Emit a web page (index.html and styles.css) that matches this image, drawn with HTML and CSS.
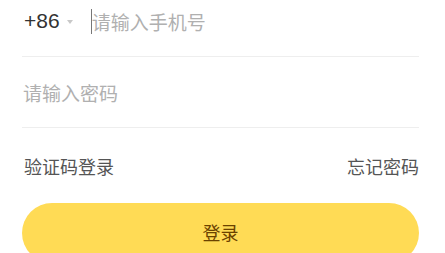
FILE: index.html
```html
<!DOCTYPE html>
<html lang="zh">
<head>
<meta charset="utf-8">
<link rel="stylesheet" href="styles.css">
</head>
<body>
<div class="login">
  <div class="form">
    <div class="row">
      <span class="code">+86</span>
      <span class="arrow"></span>
      <span class="caret"></span>
      <span class="placeholder">请输入手机号</span>
    </div>
    <div class="row">
      <span class="placeholder">请输入密码</span>
    </div>
  </div>
  <div class="links">
    <span class="link">验证码登录</span>
    <span class="link">忘记密码</span>
  </div>
  <div class="btn">登录</div>
</div>
</body>
</html>
```
FILE: styles.css
```css
html, body {
  margin: 0;
  padding: 0;
  background: #fff;
  overflow: hidden;
}
.login {
  padding: 0 26px 0 22px;
  font-family: "Noto Sans CJK SC", "Liberation Sans", sans-serif;
}
.form {
  margin-top: -14px;
}
.row {
  height: 70px;
  border-bottom: 1px solid #eeeeee;
  display: flex;
  align-items: center;
  padding-left: 1px;
}
.code {
  font-family: "Liberation Sans", sans-serif;
  font-size: 21px;
  color: #333;
  margin-left: 1px;
}
.arrow {
  width: 0;
  height: 0;
  border-left: 3px solid transparent;
  border-right: 3px solid transparent;
  border-top: 4px solid #c8c8c8;
  margin: 2px 0 0 7px;
}
.caret {
  width: 1px;
  height: 25px;
  background: #777;
  margin-left: 18px;
}
.placeholder {
  font-size: 19px;
  color: #b0b0b0;
}
.links {
  height: 75px;
  display: flex;
  align-items: center;
  justify-content: space-between;
  padding-left: 2px;
}
.link {
  font-size: 18px;
  color: #555;
}
.btn {
  height: 60px;
  border-radius: 30px;
  background: #ffdb55;
  color: #6b4200;
  font-size: 18px;
  display: flex;
  align-items: center;
  justify-content: center;
  padding-bottom: 2px;
  box-sizing: border-box;
}
```
